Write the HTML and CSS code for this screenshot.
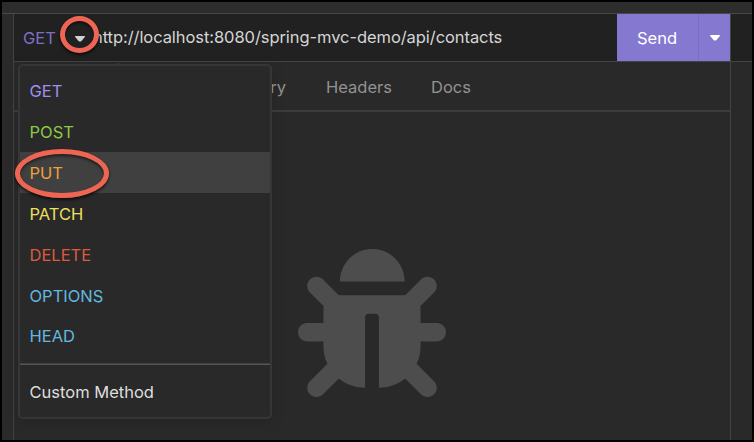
FILE: index.html
```html
<!DOCTYPE html>
<html lang="en">
<head>
<meta charset="utf-8">
<title>API client</title>
<link rel="stylesheet" href="styles.css">
</head>
<body>
<div class="window">
  <div class="topbar"></div>
  <div class="columns">
    <aside class="sidebar"></aside>
    <main class="request">
      <div class="urlbar">
        <button class="method"><span>GET</span>
          <svg class="caret" viewBox="0 0 12 8"><path d="M1.7 1h8.6q1.1 0 .5 1L7.5 5.9Q6 7.3 4.5 5.9L1.2 2Q.6 1 1.7 1z"/></svg>
        </button>
        <span class="url">http://localhost:8080/spring-mvc-demo/api/contacts</span>
        <button class="send"><span>Send</span></button>
        <button class="send-more"><svg class="caret" viewBox="0 0 12 8"><path d="M1.7 1h8.6q1.1 0 .5 1L7.5 5.9Q6 7.3 4.5 5.9L1.2 2Q.6 1 1.7 1z"/></svg></button>
      </div>
      <nav class="tabs">
        <span class="tab body-tab"></span>
        <span class="tab query">Query</span>
        <span class="tab headers">Headers</span>
        <span class="tab docs">Docs</span>
      </nav>
      <div class="empty">
        <svg class="bug" viewBox="0 0 512 512"><path d="M511.988 288.9c-.478 17.43-15.217 31.1-32.653 31.1H424v16c0 21.864-4.882 42.584-13.6 61.145l60.228 60.228c12.496 12.497 12.496 32.758 0 45.255-12.498 12.497-32.759 12.496-45.256 0l-54.736-54.736C345.886 467.965 314.351 480 280 480V236c0-6.627-5.373-12-12-12h-24c-6.627 0-12 5.373-12 12v244c-34.351 0-65.886-12.035-90.636-32.108l-54.736 54.736c-12.498 12.497-32.759 12.496-45.256 0-12.496-12.497-12.496-32.758 0-45.255l60.228-60.228C92.882 378.584 88 357.864 88 336v-16H32.666C15.23 320 .491 306.33.013 288.9-.484 270.816 14.028 256 32 256h56v-58.745l-46.628-46.628c-12.496-12.497-12.496-32.758 0-45.255 12.498-12.497 32.758-12.497 45.256 0L141.255 160h229.489l54.627-54.627c12.498-12.497 32.758-12.497 45.256 0 12.496 12.497 12.496 32.758 0 45.255L424 197.255V256h56c17.972 0 32.484 14.816 31.988 32.9zM257 0c-61.856 0-112 50.144-112 112h224C369 50.144 318.856 0 257 0z"/></svg>
      </div>
    </main>
    <aside class="response"><div class="response-head"></div></aside>
  </div>
</div>
<div class="menu">
  <div class="item get"><span>GET</span></div>
  <div class="item post"><span>POST</span></div>
  <div class="item put"><span>PUT</span></div>
  <div class="item patch"><span>PATCH</span></div>
  <div class="item delete"><span>DELETE</span></div>
  <div class="item options"><span>OPTIONS</span></div>
  <div class="item head"><span>HEAD</span></div>
  <hr>
  <div class="item custom"><span>Custom Method</span></div>
</div>
<div class="ring ring-caret"></div>
<div class="ring ring-put"></div>
</body>
</html>
```
FILE: styles.css
```css
* { box-sizing: border-box; }
body {
  margin: 0;
  width: 754px;
  height: 442px;
  overflow: hidden;
  position: relative;
  background: #000;
  font: 16.5px/20px Inter, "Liberation Sans", sans-serif;
  font-weight: 430;
  color: #d5d5d5;
}
button {
  border: 0;
  padding: 0;
  background: none;
  font: inherit;
  color: inherit;
}
.window {
  height: 442px;
  border: 2px solid #000;
  display: flex;
  flex-direction: column;
  background: #292929;
}
.topbar { height: 12px; background: #2d2d2d; border-bottom: 1px solid #484848; }
.columns { flex: 1; display: flex; }
.sidebar { width: 12px; background: #2a2a2a; border-right: 1px solid #434343; }
.request { width: 717px; border-right: 1px solid #434343; display: flex; flex-direction: column; }
.response { flex: 1; }
.response-head { height: 48px; background: #212121; border-bottom: 1px solid #434343; }
.urlbar {
  height: 48px;
  display: flex;
  align-items: center;
  background: #212121;
  border-bottom: 1px solid #434343;
}
.method { display: flex; align-items: center; width: 79px; padding-left: 9px; color: #7d70c4; }
.caret { width: 12px; height: 8px; fill: #d2d2d2; }
.method .caret { margin: 2px 0 0 18px; }
.url { flex: 1; white-space: nowrap; letter-spacing: -0.07px; padding-bottom: 1px; }
.send, .send-more { height: 47px; background: #8578d0; color: #fff; }
.send { width: 81px; padding-right: 1px; }
.send-more { width: 32px; border-left: 1px solid #7a70b6; }
.send-more .caret { fill: #fff; display: block; margin: 1px auto 0; }
.tabs { height: 50px; display: flex; align-items: center; padding-top: 1px; border-bottom: 2px solid #3c3c3c; color: #929292; }
.body-tab { width: 105px; height: 48px; border-right: 1px solid #434343; }
.query { width: 207px; padding-right: 40px; text-align: right; }
.headers { width: 105px; }
.empty { flex: 1; padding: 137px 0 0 284px; }
.bug { display: block; width: 148px; height: 148px; fill: #4d4d4d; }
.menu {
  position: absolute;
  left: 18px;
  top: 64px;
  width: 254px;
  height: 355px;
  padding-top: 4px;
  border: 2px solid #363636;
  border-radius: 5px;
  background: #292929;
  box-shadow: 0 3px 14px rgba(0, 0, 0, .12);
}
.item { height: 41px; display: flex; align-items: center; padding-left: 9.5px; }
.get { color: #a08ff0; }
.post { color: #8bc948; }
.put { color: #eda03e; background: #404040; }
.patch { color: #ebe05c; }
.delete { color: #dd5a3f; }
.options, .head { color: #62b8e2; }
.head { padding-bottom: 1px; }
.custom { color: #dedede; }
.menu hr { height: 2px; margin: 6px 0 6px; border: 0; background: linear-gradient(#404040 50%, #555 50%); }
.ring {
  position: absolute;
  border: 5px solid #ee6553;
  border-radius: 50%;
  box-shadow: 0 2px 3px rgba(0, 0, 0, .7), inset 0 2px 3px rgba(0, 0, 0, .55);
}
.ring-caret { left: 60px; top: 16px; width: 39px; height: 37px; }
.ring-put { left: 15px; top: 149px; width: 94px; height: 49px; }
```
